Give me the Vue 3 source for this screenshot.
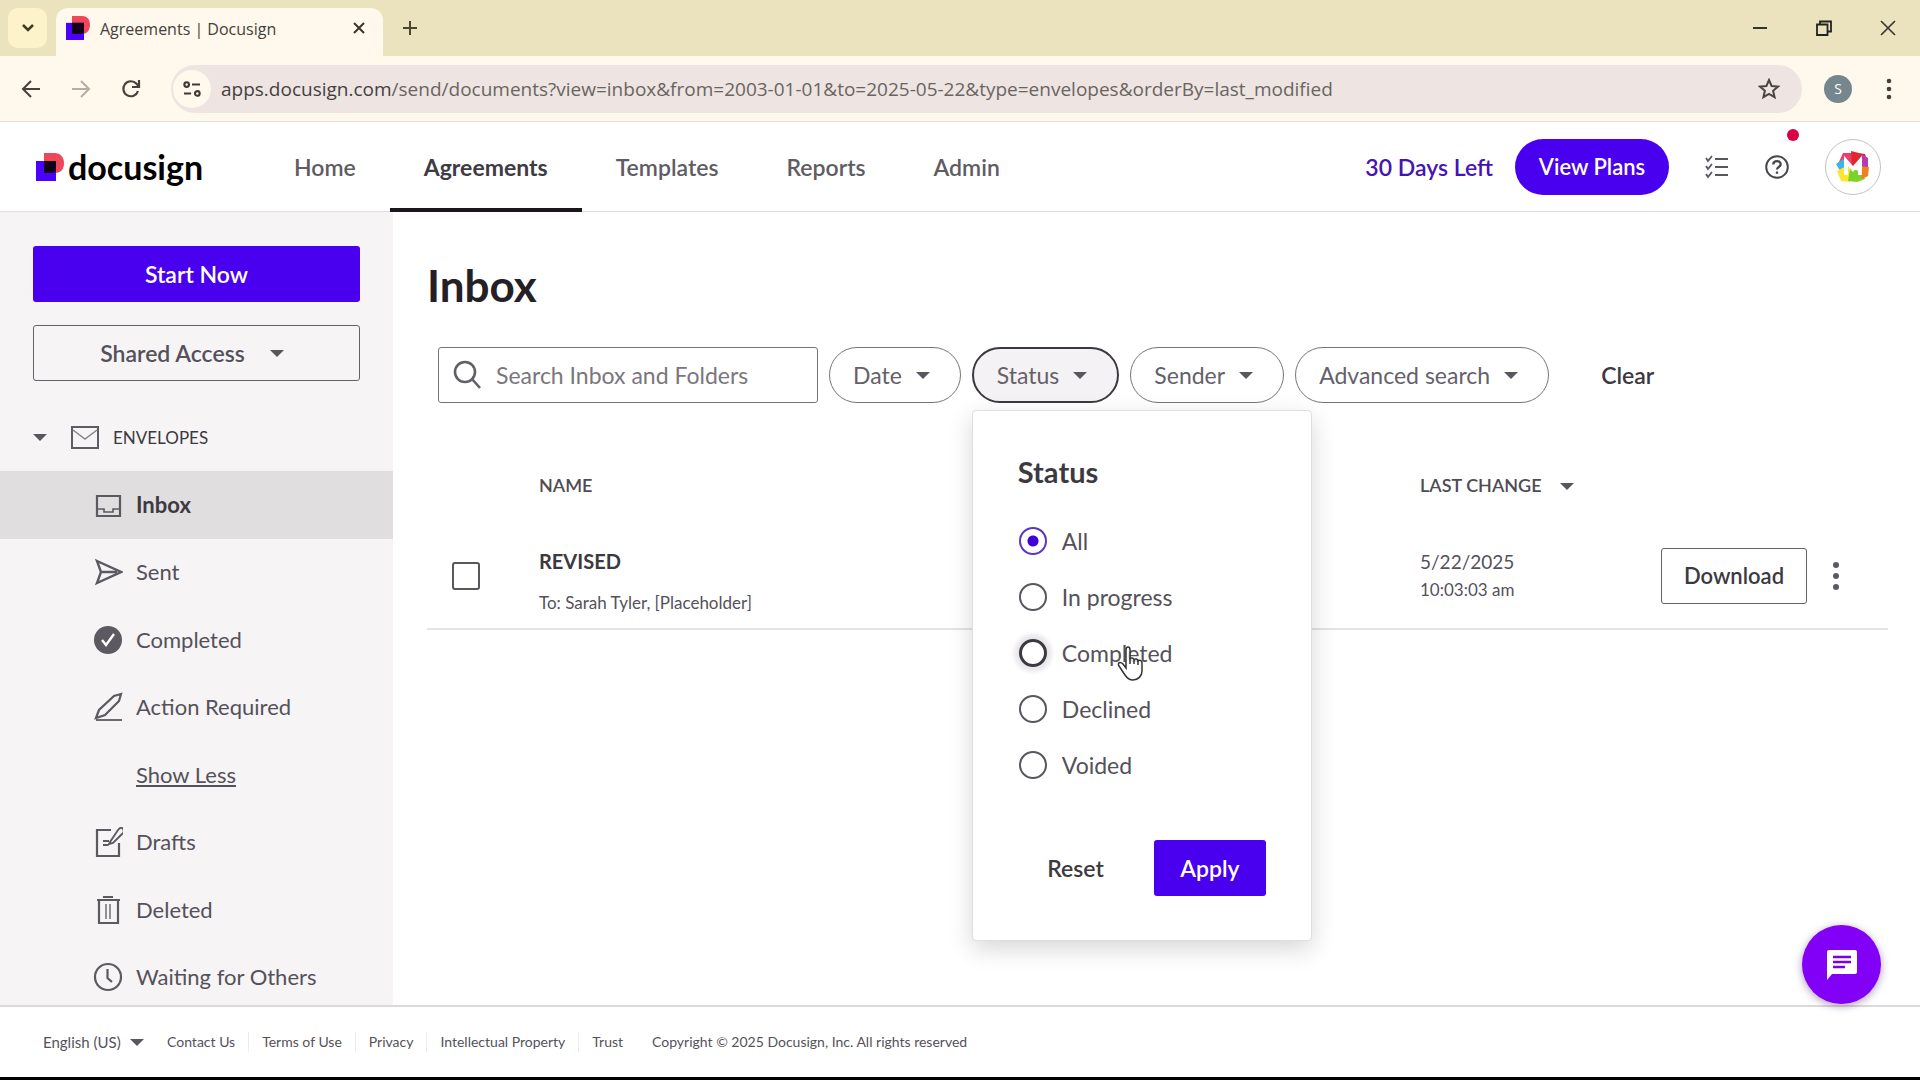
<script setup>
import { ref } from 'vue'

const navItems = ['Home', 'Agreements', 'Templates', 'Reports', 'Admin']
const folders = ['Inbox', 'Sent', 'Completed', 'Action Required', 'Show Less', 'Drafts', 'Deleted', 'Waiting for Others']
const statuses = ['All', 'In progress', 'Completed', 'Declined', 'Voided']
const footerLinks = ['Contact Us', 'Terms of Use', 'Privacy', 'Intellectual Property', 'Trust']

const status = ref('All')
const search = ref('')
const picked = ref(false)
</script>

<template>
  <div class="window">
    <div class="tabstrip">
      <button class="tab-search" aria-label="Search tabs">
        <svg width="14" height="10" viewBox="0 0 14 10"><path d="M2 2l5 5 5-5" fill="none" stroke="#3d3a28" stroke-width="2.500" /></svg>
      </button>
      <div class="tab">
        <svg class="favicon" width="24" height="24" viewBox="0 0 28 28"><path d="M7 0h12c5 0 9 4 9 10s-3 11-9 11H7z" fill="#f0465a" /><path d="M0 8h21v20H0z" fill="#4c00ff" /><path d="M7 8h14v11q-1 2-4 2H7z" fill="#130018" /></svg>
        <span class="tab-title">Agreements | Docusign</span>
        <button class="bare" aria-label="Close tab">
          <svg width="14" height="14" viewBox="0 0 14 14"><path d="M2 2l10 10M12 2L2 12" stroke="#3a362c" stroke-width="2" /></svg>
        </button>
      </div>
      <button class="bare new-tab" aria-label="New tab">
        <svg width="16" height="16" viewBox="0 0 16 16"><path d="M8 1v14M1 8h14" stroke="#4b4633" stroke-width="2" /></svg>
      </button>
      <div class="window-buttons">
        <button class="bare" aria-label="Minimize"><svg width="16" height="16" viewBox="0 0 16 16"><path d="M1 8h14" stroke="#333" stroke-width="2" /></svg></button>
        <button class="bare" aria-label="Restore"><svg width="16" height="16" viewBox="0 0 16 16"><path d="M1 4.500h10.500v10.500H1zM4 4V1.500h11v10h-3" fill="none" stroke="#222" stroke-width="1.800" /></svg></button>
        <button class="bare" aria-label="Close"><svg width="16" height="16" viewBox="0 0 16 16"><path d="M1 1l14 14M15 1L1 15" stroke="#333" stroke-width="1.600" /></svg></button>
      </div>
    </div>

    <div class="toolbar">
      <button class="bare tool" aria-label="Back"><svg width="20" height="20" viewBox="0 0 20 20"><path d="M19 10H3M10 2l-8 8 8 8" fill="none" stroke="#45413c" stroke-width="2" /></svg></button>
      <button class="bare tool" aria-label="Forward"><svg width="20" height="20" viewBox="0 0 20 20"><path d="M1 10h16M10 2l8 8-8 8" fill="none" stroke="#b3ada5" stroke-width="2" /></svg></button>
      <button class="bare tool" aria-label="Reload"><svg width="20" height="20" viewBox="0 0 20 20"><path d="M17 12a7.500 7.500 0 1 1-1.500-7.200L18 7.500M18 1v7h-7" fill="none" stroke="#45413c" stroke-width="2.200" /></svg></button>
      <div class="address">
        <span class="site-info">
          <svg width="18" height="16" viewBox="0 0 20 18" fill="none" stroke="#3f3b37" stroke-width="2.400"><circle cx="4" cy="4" r="2.600" /><path d="M10 4h9M1 14h8" /><circle cx="16" cy="14" r="2.600" /></svg>
        </span>
        <span class="url"><b>apps.docusign.com</b>/send/documents?view=inbox&amp;from=2003-01-01&amp;to=2025-05-22&amp;type=envelopes&amp;orderBy=last_modified</span>
        <button class="bare" aria-label="Bookmark this page"><svg width="22" height="22" viewBox="0 0 22 22"><path d="M11 2l2.600 6 6.400.6-4.900 4.200 1.500 6.400L11 15.800l-5.600 3.400 1.500-6.400L2 8.600 8.400 8z" fill="none" stroke="#4a4542" stroke-width="2" /></svg></button>
      </div>
      <span class="profile">S</span>
      <button class="bare" aria-label="Browser menu"><svg width="6" height="24" viewBox="0 0 6 24" fill="#45413c"><circle cx="3" cy="4" r="2.300" /><circle cx="3" cy="12" r="2.300" /><circle cx="3" cy="20" r="2.300" /></svg></button>
    </div>

    <header class="header">
      <a class="logo" href="#">
        <svg width="28" height="28" viewBox="0 0 28 28"><path d="M8 0h11c5 0 9 4 9 10s-3 10-9 10H8z" fill="#f0465a" /><path d="M0 8h20v20H0z" fill="#4c00ff" /><path d="M8 8h12v10q-1 2-4 2H8z" fill="#130018" /></svg>
        <span>docusign</span>
      </a>
      <nav class="nav">
        <a v-for="item in navItems" :key="item" href="#" :class="{ active: item === 'Agreements' }">{{ item }}</a>
      </nav>
      <div class="header-right">
        <a class="trial" href="#">30 Days Left</a>
        <button class="plans">View Plans</button>
        <button class="bare" aria-label="Tasks"><svg width="24" height="24" viewBox="0 0 24 24" fill="none" stroke="#5a565e" stroke-width="2"><path d="M10 4h13M10 12h13M10 20h13" /><path d="M1 3l2 3 4-5M1 11l2 3 4-5M1 19l2 3 4-5" stroke-width="1.800" /></svg></button>
        <button class="bare help" aria-label="Help">
          <svg width="24" height="24" viewBox="0 0 24 24" fill="none" stroke="#4a464e" stroke-width="2"><circle cx="12" cy="12" r="10.800" /><path d="M8.300 9.500C8.300 5 15.700 5 15.700 9.300c0 2.700-3.700 2.700-3.700 5.200M12 16.500v2.300" stroke-width="2.300" /></svg>
          <i class="dot"></i>
        </button>
        <button class="avatar" aria-label="Account">
          <svg width="36" height="36" viewBox="0 0 36 36">
            <path d="M3 15L8 4h9v14H3z" fill="#e83f6c" /><path d="M16 2l8 2 6 1 3 9-16 4z" fill="#e0272e" /><path d="M26 5l7 4v9l-9 2z" fill="#b43bb0" /><path d="M1 15l7-5 9 9-10 6z" fill="#3eb4e4" /><path d="M2 22l9-5 7 3-3 13-9-1z" fill="#ffe62e" /><path d="M15 20l11 2 4 8-8 3-9-1z" fill="#7bd32a" /><path d="M23 17l11 1-1 9-6 3z" fill="#ef8122" />
            <path d="M11 26V12l7 8 7-8v14" fill="none" stroke="#fff" stroke-width="4" />
          </svg>
        </button>
      </div>
    </header>

    <div class="body">
      <aside class="sidebar">
        <button class="start">Start Now</button>
        <button class="shared">Shared Access <i class="caret"></i></button>
        <button class="bare group"><i class="caret"></i>
          <svg width="28" height="23" viewBox="0 0 28 23" fill="none" stroke="#605c64"><path d="M1 1h26v21H1z" stroke-width="2" /><path d="M2 4l12 9 12-9" stroke="#89858d" stroke-width="1.500" /></svg>
          ENVELOPES
        </button>
        <ul class="folders">
          <li v-for="f in folders" :key="f" :class="{ current: f === 'Inbox' }">
            <a href="#" :class="{ less: f === 'Show Less' }">
              <svg class="folder-icon" width="30" height="30" viewBox="0 0 30 30" fill="none" stroke="#5d5961" stroke-width="2.200">
                <template v-if="f === 'Inbox'"><path d="M4 6h23v20H4z" /><path d="M4 19h7v3h9v-3h7" stroke-width="1.600" /></template>
                <template v-else-if="f === 'Sent'"><path d="M4 4l24 11L4 26l4-11zM8 15h16" stroke-width="2.400" /></template>
                <template v-else-if="f === 'Completed'"><circle cx="15" cy="15" r="14" fill="#5d5961" stroke="none" /><path d="M9 15l4 5 8-11" stroke="#fff" stroke-width="2.400" /></template>
                <template v-else-if="f === 'Action Required'"><path d="M3 26l3-8L21 4l7-2-2 7L12 23z" /><path d="M3 28h26" stroke-width="1.800" /></template>
                <template v-else-if="f === 'Drafts'"><path d="M18 3H4v26h22V16" /><path d="M17 15L25 3q3-4 5-1t-1 5L20 16l-4 1zM10 14h6M10 18h6" stroke-width="1.900" /></template>
                <template v-else-if="f === 'Deleted'"><path d="M4 5h23M10 2h10M6 5v23h19V5" /><path d="M13 9v15M17 9v15" stroke-width="1.300" /></template>
                <template v-else-if="f === 'Waiting for Others'"><circle cx="15" cy="15" r="13" /><path d="M14.500 7v9l4.500 4" /></template>
              </svg>
              <span>{{ f }}</span>
            </a>
          </li>
        </ul>
      </aside>

      <main class="main">
        <h1>Inbox</h1>
        <form class="filters" @submit.prevent>
          <label class="search">
            <svg width="30" height="30" viewBox="0 0 30 30" fill="none" stroke="#625e66" stroke-width="2.600"><circle cx="12" cy="12" r="10" /><path d="M19 19l8 9" /></svg>
            <input v-model="search" type="text" placeholder="Search Inbox and Folders" aria-label="Search Inbox and Folders" />
          </label>
          <button type="button" class="pill">Date <i class="caret"></i></button>
          <div class="status-filter">
            <button type="button" class="pill open">Status <i class="caret"></i></button>
            <section class="popup">
              <h2>Status</h2>
              <div class="options">
                <label v-for="s in statuses" :key="s">
                  <input v-model="status" type="radio" name="status" :value="s" :class="{ hovered: s === 'Completed' }" />
                  {{ s }}
                </label>
                <svg class="pointer" width="26" height="36" viewBox="0 0 26 36"><path d="M9 23V5c0-4 4-4 4 0v9c1-2 4-1 4 1 1-2 4-1 4 1 1-1 4-1 4 2v8c0 5-4 9-9 9-4 0-6-2-8-5l-6-9c-2-3 1-5 4-2z" fill="#fff" fill-opacity=".75" stroke="#333" stroke-width="1.500" /><path d="M13 13v6M17 15v4M21 16v4" stroke="#333" stroke-width="1.500" /></svg>
              </div>
              <div class="popup-actions">
                <button type="button" class="text-button">Reset</button>
                <button type="button" class="apply">Apply</button>
              </div>
            </section>
          </div>
          <button type="button" class="pill">Sender <i class="caret"></i></button>
          <button type="button" class="pill">Advanced search <i class="caret"></i></button>
          <button type="button" class="text-button clear">Clear</button>
        </form>

        <table class="list">
          <thead>
            <tr><th class="col-check"></th><th class="col-name">NAME</th><th class="col-date">LAST CHANGE <i class="caret"></i></th><th class="col-actions"></th></tr>
          </thead>
          <tbody>
            <tr>
              <td><input v-model="picked" type="checkbox" class="check" aria-label="Select REVISED" /></td>
              <td class="name-cell"><div class="subject">REVISED</div><div class="to">To: Sarah Tyler, [Placeholder]</div></td>
              <td><div class="date">5/22/2025</div><div class="time">10:03:03 am</div></td>
              <td>
                <div class="row-actions">
                  <button class="download">Download</button>
                  <button class="bare" aria-label="More actions"><svg width="6" height="30" viewBox="0 0 6 30" fill="#5d5961"><circle cx="3" cy="4" r="3" /><circle cx="3" cy="15" r="3" /><circle cx="3" cy="26" r="3" /></svg></button>
                </div>
              </td>
            </tr>
          </tbody>
        </table>
      </main>
    </div>

    <footer class="footer">
      <div class="language">
        <select aria-label="Language"><option>English (US)</option></select>
        <i class="caret"></i>
      </div>
      <a v-for="l in footerLinks" :key="l" href="#">{{ l }}</a>
      <span class="copyright">Copyright © 2025 Docusign, Inc. All rights reserved</span>
    </footer>

    <button class="chat" aria-label="Chat">
      <svg width="32" height="32" viewBox="0 0 32 32"><path d="M3 1h26q2 0 2 2v20q0 2-2 2H6l-5 6V3q0-2 2-2z" fill="#fff" /><path d="M7 8h18M7 13h18M7 18h12" stroke="#7700e6" stroke-width="2.600" /></svg>
    </button>
  </div>
</template>

<style>
body {
  background: #fff;
}
*,
*::before,
*::after {
  box-sizing: border-box;
}
</style>

<style scoped>
.window {
  display: flex;
  flex-direction: column;
  height: 100vh;
  overflow: hidden;
  border-bottom: 3px solid #000;
  font-family: Lato, "Liberation Sans", sans-serif;
  font-size: 22px;
  line-height: 28px;
  color: #55515a;
}
button,
input,
select {
  font: inherit;
  color: inherit;
  margin: 0;
}
button {
  cursor: pointer;
}
a {
  color: inherit;
  text-decoration: none;
}
svg {
  display: block;
  flex: none;
}
.bare {
  border: 0;
  background: none;
  padding: 0;
}
.caret {
  flex: none;
  border: 7px solid transparent;
  border-top-color: #5a565e;
  border-bottom: 0;
}

/* Browser chrome */
.tabstrip,
.toolbar {
  flex: none;
  display: flex;
  align-items: center;
  font-family: "Open Sans", "Noto Sans", sans-serif;
}
.tabstrip {
  height: 56px;
  background: #ebe3bd;
  padding: 8px 24px 0 8px;
}
.tab-search {
  display: grid;
  place-items: center;
  width: 39px;
  height: 40px;
  border: 0;
  border-radius: 10px;
  background: #fdf3cb;
  margin-bottom: 8px;
}
.tab {
  display: flex;
  align-items: center;
  width: 327px;
  height: 48px;
  margin-left: 9px;
  padding: 0 17px 8px 10px;
  border-radius: 12px 12px 0 0;
  background: #fef8ed;
}
.tab-title {
  flex: 1;
  margin-left: 10px;
  padding-top: 2px;
  font-size: 16px;
  color: #45413a;
}
.new-tab {
  margin: 0 0 8px 19px;
}
.window-buttons {
  display: flex;
  gap: 48px;
  margin: 0 0 8px auto;
}
.toolbar {
  height: 66px;
  background: #fef8ed;
  border-bottom: 1px solid #e9e2d4;
  padding: 0 28px 0 21px;
}
.tool {
  margin-right: 30px;
}
.address {
  flex: 1;
  display: flex;
  align-items: center;
  height: 48px;
  border-radius: 24px;
  background: #eee5e2;
  padding: 0 22px 0 2px;
}
.site-info {
  display: grid;
  place-items: center;
  width: 38px;
  height: 38px;
  border-radius: 50%;
  background: #fef8ed;
}
.url {
  flex: 1;
  margin-left: 10px;
  font-size: 19px;
  white-space: nowrap;
  color: #6a6461;
}
.url b {
  font-weight: 400;
  color: #45403e;
}
.profile {
  width: 28px;
  height: 28px;
  margin: 0 34px 0 22px;
  border-radius: 50%;
  background: #76868e;
  color: #fff;
  font-size: 14px;
  text-align: center;
}

/* App header */
.header {
  flex: none;
  display: flex;
  height: 90px;
  border-bottom: 1px solid #dedede;
}
.logo {
  display: flex;
  align-items: center;
  gap: 4px;
  width: 260px;
  padding-left: 36px;
  color: #000;
  font-size: 34px;
  font-weight: 700;
  line-height: 40px;
}
.nav {
  display: flex;
  font-size: 23px;
  margin-bottom: -1px;
}
.nav a {
  display: flex;
  align-items: center;
  padding: 0 34px;
  font-weight: 600;
  color: #605c64;
  border-top: 4px solid transparent;
  border-bottom: 4px solid transparent;
}
.nav .active {
  border-bottom-color: #1a161c;
  color: #3f3b43;
  font-weight: 700;
}
.header-right {
  display: flex;
  align-items: center;
  margin-left: auto;
  padding-right: 39px;
}
.trial {
  color: #4614b4;
  font-size: 23px;
  font-weight: 600;
}
.plans {
  width: 154px;
  height: 56px;
  margin: 0 36px 0 22px;
  border: 0;
  border-radius: 28px;
  background: #4800ee;
  color: #fff;
  font-weight: 600;
  white-space: nowrap;
  padding: 0;
}
.help {
  position: relative;
  margin: 0 36px;
}
.dot {
  position: absolute;
  right: -10px;
  top: -26px;
  width: 12px;
  height: 12px;
  border-radius: 50%;
  background: #da0042;
}
.avatar {
  display: grid;
  place-items: center;
  width: 56px;
  height: 56px;
  padding: 0;
  border: 1px solid #c2c2c6;
  border-radius: 50%;
  background: #fff;
}

/* Sidebar */
.body {
  flex: 1;
  min-height: 0;
  display: flex;
}
.sidebar {
  flex: none;
  width: 393px;
  overflow: hidden;
  background: #f6f4f5;
  padding-top: 34px;
}
.start,
.shared {
  display: flex;
  align-items: center;
  justify-content: center;
  width: 327px;
  height: 56px;
  margin: 0 33px 23px;
  border-radius: 3px;
  font-size: 23px;
  font-weight: 600;
}
.start {
  border: 0;
  background: #4800ee;
  color: #fff;
}
.shared {
  gap: 25px;
  padding-right: 15px;
  border: 1px solid #65616a;
  background: none;
}
.group {
  display: flex;
  align-items: center;
  width: 100%;
  height: 67px;
  padding-left: 33px;
  font-size: 17px;
  color: #3d3941;
}
.group svg {
  margin: 0 14px 0 24px;
}
.folders {
  display: grid;
  grid-auto-rows: 1fr;
  height: 540px;
  margin: 0;
  padding: 0;
  list-style: none;
}
.folders a {
  display: flex;
  align-items: center;
  gap: 13px;
  height: 100%;
  padding-left: 93px;
}
.folders .current {
  background: #e0dedf;
  color: #3d3941;
  font-weight: 700;
}
.less span {
  text-decoration: underline;
}

/* Main column */
.main {
  flex: 1;
  padding: 47px 32px 0 34px;
}
h1 {
  margin: 0;
  font-size: 44px;
  line-height: 52px;
  font-weight: 700;
  color: #242026;
}
.filters {
  display: flex;
  align-items: center;
  gap: 11px;
  margin: 36px 0 0 11px;
  font-size: 23px;
}
.search {
  display: flex;
  align-items: center;
  gap: 13px;
  width: 380px;
  height: 56px;
  padding-left: 14px;
  border: 1px solid #77737b;
  border-radius: 3px;
}
.search input {
  width: 100%;
  border: 0;
  outline: 0;
  padding: 0;
  background: none;
}
.search input::placeholder {
  color: #7a767e;
}
.pill {
  display: flex;
  align-items: center;
  gap: 14px;
  height: 56px;
  padding: 0 30px 0 23px;
  border: 1px solid #77737b;
  border-radius: 28px;
  background: #fff;
  color: #65616a;
  white-space: nowrap;
}
.pill.open {
  border-width: 2px;
  border-color: #3c383f;
  background: #f4f2f4;
}
.text-button {
  border: 0;
  padding: 0;
  background: none;
  color: #3d3941;
  font-weight: 600;
}
.clear {
  margin-left: 41px;
}
.status-filter {
  position: relative;
}
.popup {
  position: absolute;
  z-index: 2;
  left: 0;
  top: 63px;
  width: 340px;
  padding: 44px 45px;
  border: 1px solid #e0dee0;
  border-radius: 4px;
  background: #fff;
  box-shadow: 0 8px 24px rgba(0, 0, 0, 0.16);
}
.popup h2 {
  margin: 0 0 24px;
  font-size: 29px;
  line-height: 34px;
  font-weight: 700;
  color: #3d3941;
}
.options {
  position: relative;
}
.options label {
  display: flex;
  align-items: center;
  gap: 15px;
  height: 56px;
}
.options input {
  appearance: none;
  width: 28px;
  height: 28px;
  margin-left: 1px;
  border: 2px solid #5a565e;
  border-radius: 50%;
  background: #fff;
}
.options input:checked {
  border-color: #5a35c4;
  background: radial-gradient(circle, #4000d8 5px, #fff 6px);
}
.options .hovered {
  border-width: 3px;
  border-color: #3d3941;
  box-shadow: 0 0 4px 5px #e9e7ea;
}
.pointer {
  position: absolute;
  left: 99px;
  top: 132px;
}
.popup-actions {
  display: flex;
  justify-content: flex-end;
  gap: 50px;
  margin-top: 47px;
}
.apply {
  width: 112px;
  height: 56px;
  border: 0;
  border-radius: 3px;
  background: #4800ee;
  color: #fff;
  font-weight: 600;
}

/* Envelope table */
.list {
  width: 100%;
  margin-top: 43px;
  border-collapse: collapse;
  table-layout: fixed;
}
.list th {
  height: 77px;
  padding: 0;
  text-align: left;
  font-size: 18px;
  font-weight: 600;
  color: #4f4b53;
}
.list th .caret {
  display: inline-block;
  margin: 0 0 2px 14px;
}
.col-check {
  width: 112px;
}
.col-date {
  width: 241px;
}
.col-actions {
  width: 227px;
}
.list td {
  height: 106px;
  padding: 0;
  border-bottom: 2px solid #e4e2e4;
}
.list .name-cell {
  padding-top: 12px;
}
.check {
  appearance: none;
  display: block;
  width: 28px;
  height: 28px;
  margin-left: 25px;
  border: 2px solid #5a565e;
  border-radius: 3px;
}
.subject {
  margin-bottom: 14px;
  font-size: 20px;
  font-weight: 700;
  color: #3d3941;
}
.to {
  font-size: 17px;
}
.date {
  font-size: 19px;
}
.time {
  font-size: 17px;
}
.row-actions {
  display: flex;
  align-items: center;
  gap: 26px;
}
.download {
  width: 146px;
  height: 56px;
  border: 1px solid #65616a;
  border-radius: 3px;
  background: #fff;
  color: #3d3941;
  font-weight: 600;
}

/* Footer */
.footer {
  flex: none;
  display: flex;
  align-items: center;
  height: 72px;
  border-top: 2px solid #dcdadc;
  background: #fff;
  padding-left: 43px;
  font-size: 14px;
  line-height: 20px;
}
.footer > a {
  padding-right: 13px;
  margin-right: 13px;
  border-right: 1px solid #ececec;
}
.footer > a:last-of-type {
  border: 0;
  margin-right: 16px;
}
.language {
  display: flex;
  align-items: center;
  gap: 9px;
  margin-right: 23px;
  font-size: 15px;
}
.language select {
  appearance: none;
  border: 0;
  padding: 0;
  background: none;
}
.chat {
  position: absolute;
  right: 39px;
  bottom: 76px;
  display: grid;
  place-items: center;
  width: 79px;
  height: 79px;
  padding: 0;
  border: 0;
  border-radius: 50%;
  background: #8200f5;
  box-shadow: 0 2px 8px rgba(60, 0, 90, 0.4);
}
</style>
